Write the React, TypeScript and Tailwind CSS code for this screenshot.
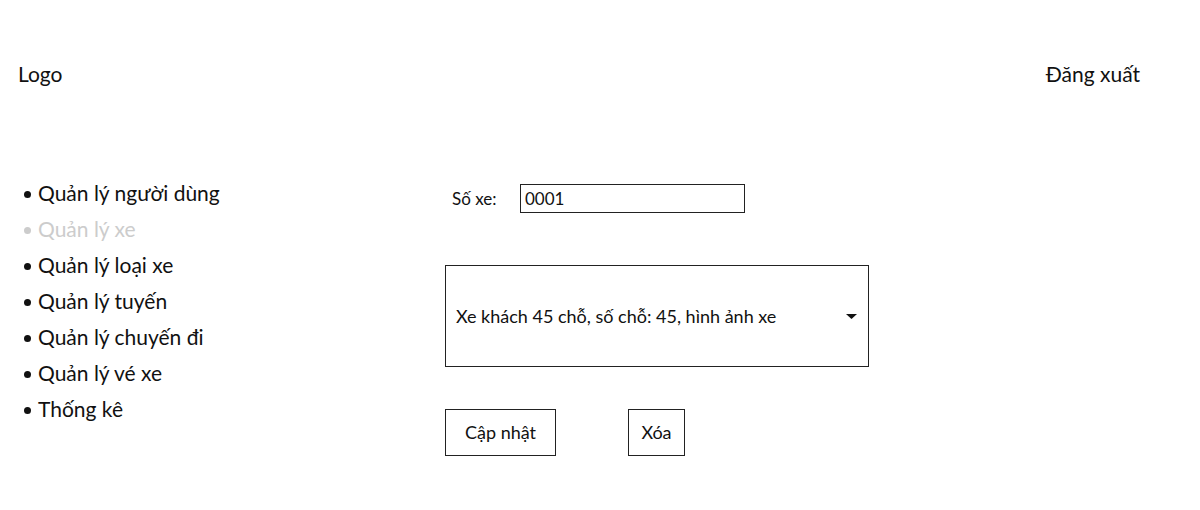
import React from "react";

const menu = [
  { label: "Quản lý người dùng", active: false },
  { label: "Quản lý xe", active: true },
  { label: "Quản lý loại xe", active: false },
  { label: "Quản lý tuyến", active: false },
  { label: "Quản lý chuyến đi", active: false },
  { label: "Quản lý vé xe", active: false },
  { label: "Thống kê", active: false },
];

export default function App() {
  return (
    <div className="w-[1200px] h-[510px] bg-white text-[#111] font-['Lato','Noto_Sans',sans-serif]">
      <header className="flex justify-between items-center pt-[60px] pl-[18px] pr-[60px] h-[88px] text-[21px]">
        <span>Logo</span>
        <span>Đăng xuất</span>
      </header>

      <div className="flex">
        {/* sidebar */}
        <nav className="w-[445px] pl-[24px] pt-[87px]">
          <ul>
            {menu.map((m) => (
              <li
                key={m.label}
                className={`flex items-center h-[36px] text-[21px] ${m.active ? "text-[#cccccc]" : "text-[#111]"}`}
              >
                <span
                  className={`w-[7px] h-[7px] rounded-full mr-[7px] mt-[2px] ${m.active ? "bg-[#cccccc]" : "bg-[#111]"}`}
                />
                {m.label}
              </li>
            ))}
          </ul>
        </nav>

        {/* main */}
        <main className="pt-[96px]">
          <div className="flex items-center h-[29px]">
            <label className="ml-[7px] w-[68px] text-[17px]">Số xe:</label>
            <input
              defaultValue="0001"
              className="w-[225px] h-[29px] border border-[#222] px-[4px] text-[17px] outline-none"
            />
          </div>

          <div className="mt-[52px] w-[424px] h-[102px] border border-[#222] flex items-center justify-between pl-[10px] pr-[11px] text-[18px]">
            <span>Xe khách 45 chỗ, số chỗ: 45, hình ảnh xe</span>
            <svg width="11" height="5" viewBox="0 0 11 5">
              <path d="M0 0h11L5.5 5z" fill="#111" />
            </svg>
          </div>

          <div className="mt-[42px] flex gap-[72px]">
            <button className="w-[111px] h-[47px] border border-[#222] text-[18px]">Cập nhật</button>
            <button className="w-[57px] h-[47px] border border-[#222] text-[18px]">Xóa</button>
          </div>
        </main>
      </div>
    </div>
  );
}
